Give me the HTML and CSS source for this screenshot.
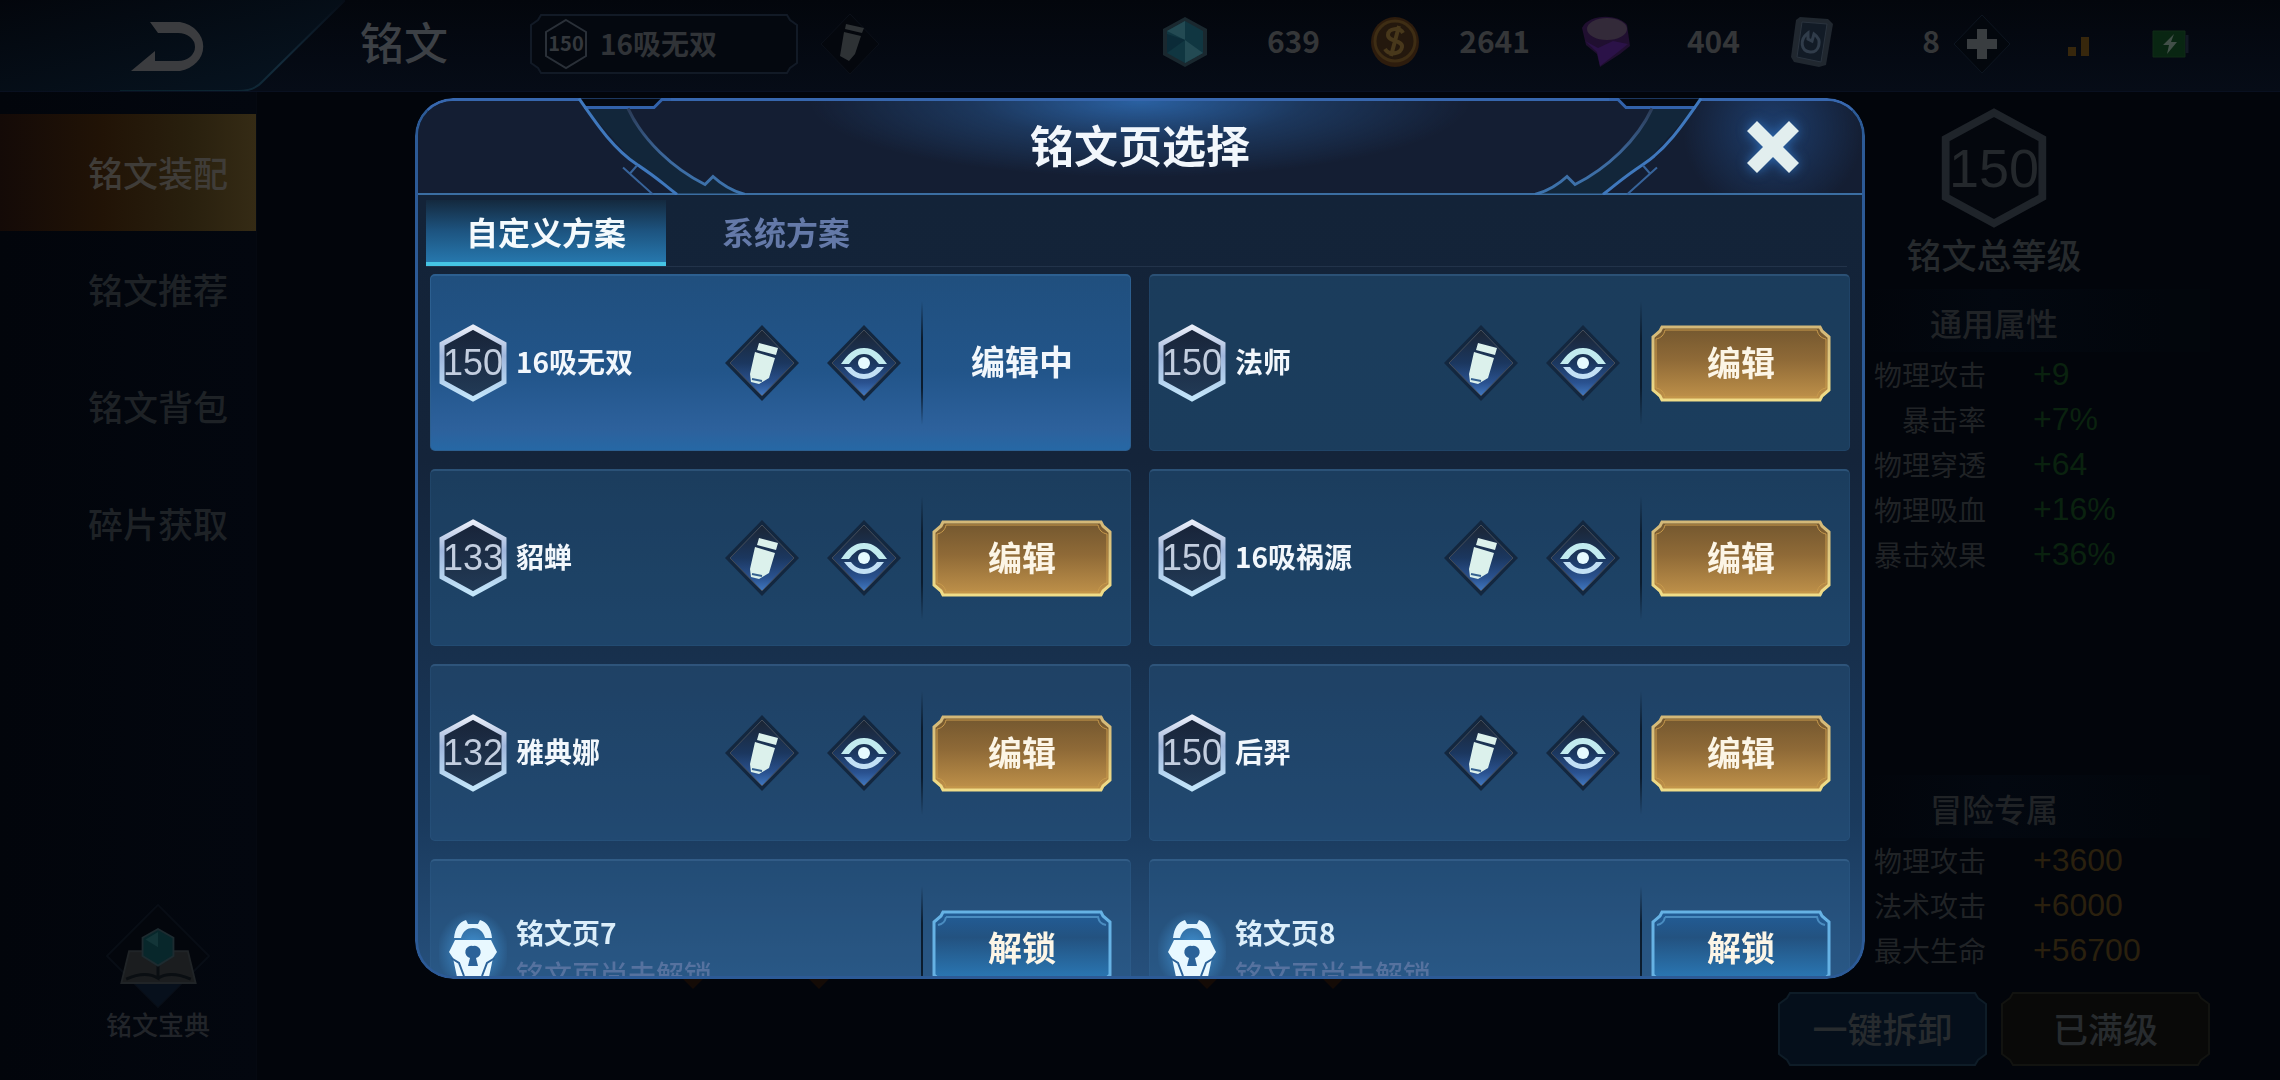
FILE: index.html
```html
<!DOCTYPE html>
<html lang="zh-CN">
<head>
<meta charset="utf-8">
<meta name="viewport" content="width=device-width, initial-scale=1">
<title>铭文</title>
<link rel="stylesheet" href="styles.css">
</head>
<body>
<svg class="sprite" width="0" height="0" aria-hidden="true">
  <defs>
    <linearGradient id="gold" x1="0" y1="0" x2="0" y2="1"><stop offset="0" stop-color="#73572f"/><stop offset=".45" stop-color="#8f6a37"/><stop offset="1" stop-color="#c0924a"/></linearGradient>
    <linearGradient id="goldEdge" x1="0" y1="0" x2="0" y2="1"><stop offset="0" stop-color="#d3b878"/><stop offset="1" stop-color="#f0dd88"/></linearGradient>
    <linearGradient id="blue" x1="0" y1="0" x2="0" y2="1"><stop offset="0" stop-color="#225d98"/><stop offset=".35" stop-color="#235280"/><stop offset="1" stop-color="#2b7dbc"/></linearGradient>
    <linearGradient id="hexEdge" x1="0" y1="0" x2="0" y2="1"><stop offset="0" stop-color="#e9edf8"/><stop offset=".4" stop-color="#9fb6dc"/><stop offset="1" stop-color="#c3e6fb"/></linearGradient>
    <linearGradient id="hexFill" x1="0" y1="0" x2="0" y2="1"><stop offset="0" stop-color="#182338"/><stop offset="1" stop-color="#223b57"/></linearGradient>
    <linearGradient id="diaFill" x1="0" y1="0" x2="0" y2="1"><stop offset="0" stop-color="#1b2534"/><stop offset=".5" stop-color="#1b375f"/><stop offset=".8" stop-color="#2a5290"/><stop offset="1" stop-color="#4179c2"/></linearGradient>
    <radialGradient id="lockGlow"><stop offset="0" stop-color="#4aa8f0" stop-opacity=".8"/><stop offset="1" stop-color="#4aa8f0" stop-opacity="0"/></radialGradient>
    <linearGradient id="backFill" x1="0" y1="0" x2="1" y2="1"><stop offset="0" stop-color="#03060c"/><stop offset="1" stop-color="#071522"/></linearGradient>
    <linearGradient id="backEdge" x1="0" y1="1" x2="1" y2="0"><stop offset="0" stop-color="#08202b"/><stop offset=".5" stop-color="#132b3b"/><stop offset="1" stop-color="#060c16"/></linearGradient>
    <linearGradient id="curve" x1="0" y1="0" x2="0" y2="1"><stop offset="0" stop-color="#2b3b56"/><stop offset=".6" stop-color="#3d6aa0"/><stop offset="1" stop-color="#3d74ae"/></linearGradient>
  </defs>
  <symbol id="hex" viewBox="0 0 68 78"><path d="M34 3 65 20V58L34 75 3 58V20Z" fill="url(#hexFill)" stroke="url(#hexEdge)" stroke-width="5"/></symbol>
  <symbol id="hex-dim" viewBox="0 0 68 78"><path d="M34 3 65 20V58L34 75 3 58V20Z" fill="#04070d" stroke="#1f242a" stroke-width="5"/></symbol>
  <symbol id="pencil" viewBox="0 0 76 78">
    <path d="M38 1 75 39 38 77 1 39Z" fill="#13273f"/>
    <path d="M38 6 70 39 38 72 6 39Z" fill="url(#diaFill)" stroke="#444d5a" stroke-width="1"/>
    <path d="M35 19 54 24 52 31 33 26ZM31 28 51 34 45 54 35 60 27 58 26 50Z" fill="#dcf1ec"/>
    <path d="M28 55 33 56 38 57" stroke="#35608f" stroke-width="2" fill="none"/>
  </symbol>
  <symbol id="eye" viewBox="0 0 76 78">
    <path d="M38 1 75 39 38 77 1 39Z" fill="#13273f"/>
    <path d="M38 6 70 39 38 72 6 39Z" fill="url(#diaFill)" stroke="#444d5a" stroke-width="1"/>
    <path d="M15 40C22 30 28 24 38 24S54 30 61 40H53C49 35 45 30 38 30S27 35 23 40Z" fill="#c2ebef"/>
    <path d="M18 43H25C28 47 32 50 38 50S48 47 51 43H58C52 51 46 55 38 55S24 51 18 43Z" fill="#c2e0f5"/>
    <circle cx="38" cy="39" r="6" fill="#e6fbff"/>
  </symbol>
  <symbol id="lock" viewBox="0 0 68 78">
    <ellipse cx="34" cy="42" rx="36" ry="40" fill="url(#lockGlow)"/>
    <path d="M15 29C16 19 20 13 27 11L29 15H39L41 11C48 13 52 19 53 29H46C44 22 40 19 34 19S24 22 22 29Z" fill="#e2f5ff"/>
    <path d="M16 31H52L58 43 54 49 50 68 45 75H23L18 68 14 49 10 43Z" fill="#e8f8ff"/>
    <path d="M34 37A6 6 0 0 1 37 49L39 57H29L31 49A6 6 0 0 1 34 37Z" fill="#2b6299"/>
    <path d="M12 49 20 54 25 67M56 49 48 54 43 67" stroke="#2b6299" stroke-width="2" fill="none"/>
  </symbol>
  <symbol id="plate-gold" viewBox="0 0 180 77">
    <path d="M11 2H169L171 6 178 12V65L171 71 169 75H11L9 71 2 65V12L9 6Z" fill="url(#gold)" stroke="url(#goldEdge)" stroke-width="3"/>
    <path d="M14 5H166C167 10 170 13 175 14V63C170 64 167 67 166 72H14C13 67 10 64 5 63V14C10 13 13 10 14 5Z" fill="none" stroke="#c99b4d" stroke-width="1"/>
  </symbol>
  <symbol id="plate-blue" viewBox="0 0 180 77">
    <path d="M11 2H169L171 6 178 12V65L171 71 169 75H11L9 71 2 65V12L9 6Z" fill="url(#blue)" stroke="#66b2e4" stroke-width="3"/>
    <path d="M14 7H166C167 12 169 14 174 15M6 15C11 14 13 12 14 7" fill="none" stroke="#4a8cc0" stroke-width="2"/>
  </symbol>
  <symbol id="corner" viewBox="0 0 340 96">
    <path d="M165 0H249L241 8H171Z" fill="#050a12"/>
    <path d="M171 10H214C228 40 252 66 290 86L298 78 326 95H262L222 67Z" fill="#12263a"/>
    <path d="M169 9H239L247 1H256" fill="none" stroke="#3262aa" stroke-width="3"/>
    <path d="M164 0C182 26 198 50 222 66S246 84 262 96" fill="none" stroke="#3f78bd" stroke-width="3"/>
    <path d="M213 10C228 42 258 70 290 86L298 78Q312 91 330 96" fill="none" stroke="url(#curve)" stroke-width="3"/>
    <path d="M222 67 215 75M208 69 238 96" fill="none" stroke="#37639a" stroke-width="2"/>
  </symbol>
</svg>

<div class="screen">
  <header class="topbar">
    <button class="back" aria-label="返回">
      <svg viewBox="0 0 345 91" width="345" height="91"><path d="M0 0H345L262 82Q254 91 238 91H0Z" fill="url(#backFill)"/><path d="M345 0 262 82Q254 91 238 91H120" fill="none" stroke="url(#backEdge)" stroke-width="2"/><path d="M150 22H180A29 25 0 0 1 180 71H131L155 51V61H178A17 14 0 0 0 178 33H158Z" fill="#3b3c3f"/></svg>
    </button>
    <h1 class="page-name">铭文</h1>
    <button class="page-select">
      <svg class="page-select-frame" viewBox="0 0 268 60" aria-hidden="true"><path d="M11 1H257L260 6 267 11V49L260 54 257 59H11L8 54 1 49V11L8 6Z" fill="#04080f" stroke="#121a26" stroke-width="2"/></svg>
      <span class="mini-badge"><svg viewBox="0 0 44 52" aria-hidden="true"><path d="M22 2 42 14V38L22 50 2 38V14Z" fill="none" stroke="#2a3038" stroke-width="2"/></svg><b>150</b></span>
      <span class="page-select-name">16吸无双</span>
    </button>
    <button class="rename" aria-label="改名">
      <svg viewBox="0 0 60 62" width="60" height="62"><path d="M30 1 59 31 30 61 1 31Z" fill="#04070d" stroke="#0b1019"/><path d="M26 11 44 15 42 20 25 16ZM24 19 41 23 35 41 29 48 20 43Z" fill="#2e3235"/></svg>
    </button>
    <ul class="wallet">
      <li><svg viewBox="0 0 50 52"><path d="M25 1 47 13V39L25 51 3 39V13Z" fill="#1a282f"/><path d="M25 5 43 15V37L25 47 7 37V15Z" fill="#103641"/><path d="M25 5V24L7 15ZM25 24 43 37 25 47Z" fill="#234a53"/><path d="M25 24 7 37V18Z" fill="#0b2b38"/></svg><span>639</span></li>
      <li><svg viewBox="0 0 50 52"><ellipse cx="25" cy="26" rx="24" ry="25" fill="#2d1c0d"/><circle cx="25" cy="25" r="20" fill="#24180d" stroke="#3e2d14" stroke-width="3"/><path d="M33 17C30 11 18 12 18 19S33 24 32 31 19 40 15 33M29 10 21 40" fill="none" stroke="#48381b" stroke-width="4"/></svg><span>2641</span></li>
      <li><svg viewBox="0 0 50 52"><path d="M2 12C8-2 38-3 47 9L50 30 40 38 20 51 17 38 6 29Z" fill="#200f30"/><ellipse cx="27" cy="13" rx="20" ry="11" fill="#332a39"/><path d="M5 25 18 32 33 25 48 28 38 36 20 50 17 36Z" fill="#2b1248"/></svg><span>404</span></li>
      <li class="narrow"><svg viewBox="0 0 50 52"><path d="M10 1 38 3 43 8 36 49 29 51 4 46 1 41 6 4Z" fill="#20272f"/><path d="M12 6 37 8 31 46 7 41Z" fill="#121b26" stroke="#2a333e"/><path d="M18 17C9 24 11 35 20 36S33 24 24 18L22 25 18 23Z" fill="none" stroke="#303c4a" stroke-width="3"/></svg><span>8</span></li>
    </ul>
    <button class="add" aria-label="增加"><svg viewBox="0 0 60 62" width="60" height="62"><path d="M30 2 58 31 30 60 2 31Z" fill="#03070d" stroke="#0d1520"/><path d="M25 16H35V26H45V36H35V46H25V36H15V26H25Z" fill="#393d40"/></svg></button>
    <svg class="signal" viewBox="0 0 24 30" aria-label="信号"><path d="M1 18H9V27H1ZM14 8H22V27H14Z" fill="#37270c"/></svg>
    <svg class="battery" viewBox="0 0 38 28" aria-label="电量"><path d="M1 1H33V27H1Z" fill="#092612" stroke="#102a16"/><path d="M35 5V23" stroke="#131924" stroke-width="3"/><path d="M22 4 11 15H17L15 24 25 12H19Z" fill="#424f48"/></svg>
  </header>

  <div class="stage">
    <nav class="side">
      <a class="side-item current" href="#equip">铭文装配</a>
      <a class="side-item" href="#recommend">铭文推荐</a>
      <a class="side-item" href="#bag">铭文背包</a>
      <a class="side-item" href="#shards">碎片获取</a>
      <a class="codex" href="#codex">
        <svg viewBox="0 0 110 110" width="110" height="106"><path d="M55 2 108 55 55 108 2 55Z" fill="#03060c" stroke="#080d15" stroke-width="2"/><path d="M30 83H80L55 108Z" fill="#07101c"/><path d="M25 50H86L94 83H17Z" fill="#1b1d1f" stroke="#202427" stroke-width="2"/><path d="M55 55V78Q42 70 22 79M55 78Q68 70 89 79" fill="none" stroke="#0a0e12" stroke-width="3"/><path d="M55 27 71 36V55L55 65 39 55V36Z" fill="#08272b" stroke="#1d2b30" stroke-width="2"/><path d="M55 30V46L42 38Z" fill="#133538"/></svg>
        <span>铭文宝典</span>
      </a>
    </nav>

    <div class="board" aria-hidden="true">
      <svg viewBox="0 0 20 10"><path d="M0 0H20L10 10Z"/></svg><svg viewBox="0 0 20 10"><path d="M0 0H20L10 10Z"/></svg><svg class="far" viewBox="0 0 20 10"><path d="M0 0H20L10 10Z"/></svg><svg viewBox="0 0 20 10"><path d="M0 0H20L10 10Z"/></svg>
    </div>

    <aside class="stats">
      <span class="total"><svg viewBox="0 0 68 78" preserveAspectRatio="none" aria-hidden="true"><use href="#hex-dim"/></svg><span>150</span></span>
      <p class="total-name">铭文总等级</p>
      <h2 class="stats-title">通用属性</h2>
      <dl class="attrs">
        <dt>物理攻击</dt><dd>+9</dd>
        <dt>暴击率</dt><dd>+7%</dd>
        <dt>物理穿透</dt><dd>+64</dd>
        <dt>物理吸血</dt><dd>+16%</dd>
        <dt>暴击效果</dt><dd>+36%</dd>
      </dl>
      <h2 class="stats-title bottom">冒险专属</h2>
      <dl class="attrs adventure">
        <dt>物理攻击</dt><dd>+3600</dd>
        <dt>法术攻击</dt><dd>+6000</dd>
        <dt>最大生命</dt><dd>+56700</dd>
      </dl>
      <div class="stats-actions">
        <button><svg viewBox="0 0 209 74" preserveAspectRatio="none" aria-hidden="true"><path d="M12 1H197L200 6 208 12V62L200 68 197 73H12L9 68 1 62V12L9 6Z" fill="#050f1b" stroke="#0e1c27" stroke-width="2"/></svg><span>一键拆卸</span></button>
        <button><svg viewBox="0 0 209 74" preserveAspectRatio="none" aria-hidden="true"><path d="M12 1H197L200 6 208 12V62L200 68 197 73H12L9 68 1 62V12L9 6Z" fill="#090908" stroke="#121310" stroke-width="2"/></svg><span>已满级</span></button>
      </div>
    </aside>
  </div>
</div>

<div class="overlay">
  <section class="dialog" role="dialog" aria-labelledby="dialog-title">
    <svg class="corner" aria-hidden="true"><use href="#corner"/></svg>
    <svg class="corner right" aria-hidden="true"><use href="#corner"/></svg>
    <header class="dialog-head">
      <h2 id="dialog-title">铭文页选择</h2>
      <button class="close" aria-label="关闭"><svg viewBox="0 0 54 54" width="54" height="54"><path d="M11 1 27 17 43 1 53 11 37 27 53 43 43 53 27 37 11 53 1 43 17 27 1 11Z" fill="#e2eeee"/></svg></button>
    </header>
    <div class="tabs" role="tablist">
      <button class="tab active" role="tab" aria-selected="true">自定义方案</button>
      <button class="tab" role="tab" aria-selected="false">系统方案</button>
    </div>
    <ul class="pages">
      <li class="card selected">
        <span class="badge"><svg aria-hidden="true"><use href="#hex"/></svg><span>150</span></span>
        <span class="name">16吸无双</span>
        <button class="tool" aria-label="改名"><svg><use href="#pencil"/></svg></button>
        <button class="tool" aria-label="预览"><svg><use href="#eye"/></svg></button>
        <i class="rule"></i>
        <span class="state">编辑中</span>
      </li>
      <li class="card">
        <span class="badge"><svg aria-hidden="true"><use href="#hex"/></svg><span>150</span></span>
        <span class="name">法师</span>
        <button class="tool" aria-label="改名"><svg><use href="#pencil"/></svg></button>
        <button class="tool" aria-label="预览"><svg><use href="#eye"/></svg></button>
        <i class="rule"></i>
        <button class="action"><svg aria-hidden="true"><use href="#plate-gold"/></svg><span>编辑</span></button>
      </li>
      <li class="card">
        <span class="badge"><svg aria-hidden="true"><use href="#hex"/></svg><span>133</span></span>
        <span class="name">貂蝉</span>
        <button class="tool" aria-label="改名"><svg><use href="#pencil"/></svg></button>
        <button class="tool" aria-label="预览"><svg><use href="#eye"/></svg></button>
        <i class="rule"></i>
        <button class="action"><svg aria-hidden="true"><use href="#plate-gold"/></svg><span>编辑</span></button>
      </li>
      <li class="card">
        <span class="badge"><svg aria-hidden="true"><use href="#hex"/></svg><span>150</span></span>
        <span class="name">16吸祸源</span>
        <button class="tool" aria-label="改名"><svg><use href="#pencil"/></svg></button>
        <button class="tool" aria-label="预览"><svg><use href="#eye"/></svg></button>
        <i class="rule"></i>
        <button class="action"><svg aria-hidden="true"><use href="#plate-gold"/></svg><span>编辑</span></button>
      </li>
      <li class="card">
        <span class="badge"><svg aria-hidden="true"><use href="#hex"/></svg><span>132</span></span>
        <span class="name">雅典娜</span>
        <button class="tool" aria-label="改名"><svg><use href="#pencil"/></svg></button>
        <button class="tool" aria-label="预览"><svg><use href="#eye"/></svg></button>
        <i class="rule"></i>
        <button class="action"><svg aria-hidden="true"><use href="#plate-gold"/></svg><span>编辑</span></button>
      </li>
      <li class="card">
        <span class="badge"><svg aria-hidden="true"><use href="#hex"/></svg><span>150</span></span>
        <span class="name">后羿</span>
        <button class="tool" aria-label="改名"><svg><use href="#pencil"/></svg></button>
        <button class="tool" aria-label="预览"><svg><use href="#eye"/></svg></button>
        <i class="rule"></i>
        <button class="action"><svg aria-hidden="true"><use href="#plate-gold"/></svg><span>编辑</span></button>
      </li>
      <li class="card">
        <span class="badge"><svg aria-hidden="true"><use href="#lock"/></svg></span>
        <span class="name locked">铭文页7<small>铭文页尚未解锁</small></span>
        <i class="rule"></i>
        <button class="action"><svg aria-hidden="true"><use href="#plate-blue"/></svg><span>解锁</span></button>
      </li>
      <li class="card">
        <span class="badge"><svg aria-hidden="true"><use href="#lock"/></svg></span>
        <span class="name locked">铭文页8<small>铭文页尚未解锁</small></span>
        <i class="rule"></i>
        <button class="action"><svg aria-hidden="true"><use href="#plate-blue"/></svg><span>解锁</span></button>
      </li>
    </ul>
  </section>
</div>
</body>
</html>
```
FILE: styles.css
```css
* { box-sizing: border-box; margin: 0; padding: 0; }

body {
  min-height: 100vh;
  background: #02050b;
  color: #2a2d31;
  font-family: "Noto Sans CJK SC", sans-serif;
  font-weight: 500;
  overflow: hidden;
}

button { border: 0; background: none; color: inherit; font: inherit; cursor: pointer; }
a { color: inherit; text-decoration: none; }
ul { list-style: none; }
svg { display: block; }
.sprite { position: absolute; }

.screen { display: flex; flex-direction: column; min-height: 100vh; }

/* Top bar */
.topbar {
  display: flex;
  align-items: center;
  height: 92px;
  padding: 0 90px 4px 0;
  background: linear-gradient(#03060c, #060c17);
  border-bottom: 1px solid #091020;
}
.back { flex: none; align-self: flex-start; }
.page-name { margin: 0 82px 0 15px; padding-bottom: 6px; font-size: 44px; line-height: 60px; font-weight: 500; color: #3c4045; }
.page-select { display: grid; width: 268px; height: 60px; grid-template-columns: 8px 44px 1fr; column-gap: 6px; align-items: center; text-align: left; }
.page-select-frame { grid-area: 1 / 1 / 2 / 4; }
.mini-badge { grid-area: 1 / 2; display: grid; place-items: center; width: 44px; height: 52px; color: #34383d; font-size: 20px; }
.mini-badge > * { grid-area: 1 / 1; }
.mini-badge b { line-height: 24px; padding-bottom: 2px; }
.mini-badge svg { width: 44px; height: 52px; }
.page-select-name { grid-area: 1 / 3; padding: 0 0 2px 6px; font-size: 28px; line-height: 40px; font-weight: 700; color: #303337; }
.rename { margin-left: 22px; }
.wallet { display: flex; gap: 50px; margin-left: auto; padding-bottom: 4px; }
.wallet li { display: flex; align-items: center; justify-content: space-between; width: 160px; font-size: 30px; line-height: 44px; font-weight: 700; color: #343638; }
.wallet li.narrow { width: 150px; }
.wallet span { padding-bottom: 4px; }
.wallet svg { width: 50px; height: 52px; }
.add { margin: 0 55px 0 12px; }
.signal { width: 24px; height: 30px; margin-right: 61px; }
.battery { width: 38px; height: 28px; }

.stage { display: flex; flex: 1; }

/* Left navigation */
.side {
  display: flex;
  flex-direction: column;
  width: 257px;
  padding: 22px 0 41px;
  background: linear-gradient(90deg, #02050b, #03070f);
  border-right: 1px solid #050911;
}
.side-item { display: flex; align-items: center; justify-content: center; height: 117px; padding: 0 0 2px 60px; font-size: 35px; color: #1e2226; }
.side-item.current { background: linear-gradient(90deg, #140a07, #211306 40%, #29200e 75%, #352b15); color: #3f3c38; }
.codex { display: flex; flex-direction: column; align-items: center; margin-top: auto; padding-left: 60px; font-size: 26px; line-height: 30px; color: #212429; }

.board { display: flex; flex: 1; align-items: flex-end; gap: 106px; padding: 0 0 90px 426px; }
.board svg { flex: none; width: 20px; height: 12px; fill: #140b06; }
.board .far { margin-left: 262px; }

/* Attribute totals */
.stats { display: flex; flex-direction: column; width: 502px; padding: 16px 70px 14px 0; color: #202326; }
.total { display: grid; place-items: center; height: 120px; font: 54px/60px "Liberation Sans", sans-serif; color: #24282c; }
.total > * { grid-area: 1 / 1; }
.total svg { width: 106px; height: 120px; }
.total-name { margin: 4px 0 13px; font-size: 35px; line-height: 44px; text-align: center; color: #262a2d; }
.stats-title { height: 63px; background: linear-gradient(90deg, #02050b 20%, #030810 50%, #02060c 90%); font-size: 32px; line-height: 66px; font-weight: 500; text-align: center; }
.stats-title.bottom { margin-top: auto; }
.attrs { display: grid; grid-template-columns: 208px 1fr; column-gap: 47px; font-size: 28px; line-height: 45px; }
.attrs dt { text-align: right; font-weight: 400; }
.attrs dd { font: 32px/45px "Liberation Sans", sans-serif; color: #0a220f; }
.attrs.adventure dd { color: #2a200e; }
.stats-actions { display: flex; gap: 14px; margin-top: 19px; }
.stats-actions button { display: grid; flex: 1; height: 74px; place-items: center; font-size: 35px; line-height: 48px; color: #272b2e; }
.stats-actions button > * { grid-area: 1 / 1; }
.stats-actions span { padding-bottom: 2px; }
.stats-actions svg { width: 100%; height: 74px; }

/* Page picker */
.overlay { position: fixed; inset: 0; display: flex; justify-content: center; padding: 98px 0 101px; }
.dialog {
  position: relative;
  display: flex;
  flex-direction: column;
  width: 63.6%;
  border: 3px solid #2c5a96;
  border-top-color: #3767ae;
  border-radius: 38px;
  clip-path: inset(0 round 38px);
  background: linear-gradient(#132338 100px, #14243a 360px, #1a3a5d 720px, #26507c);
  color: #f2f7fc;
}
.corner { position: absolute; top: -3px; left: -3px; width: 340px; height: 97px; z-index: 1; pointer-events: none; }
.corner.right { left: auto; right: -3px; transform: scaleX(-1); }
.dialog-head {
  display: grid;
  flex: none;
  grid-template-columns: 178px 1fr 178px;
  align-items: center;
  justify-items: center;
  height: 94px;
  border-bottom: 2px solid #3b6ea2;
  border-radius: 35px 35px 0 0;
  background:
    radial-gradient(ellipse 330px 76px at 50% 0, #2a61a2, rgba(36, 80, 134, .5) 50%, transparent),
    radial-gradient(ellipse 90px 90px at calc(100% - 89px) 30%, #1d3d6c, transparent),
    #141e33;
}
.dialog-head h2 { grid-column: 2; padding-bottom: 6px; font-size: 44px; line-height: 60px; font-weight: 700; }
.close { position: relative; z-index: 2; filter: drop-shadow(0 0 6px #2f6cb4); }

.tabs { display: flex; flex: none; margin: 5px 15px 0 8px; border-bottom: 1px solid #22334a; }
.tab { width: 240px; height: 66px; border-bottom: 4px solid transparent; font-size: 32px; line-height: 62px; font-weight: 700; color: #6479a8; }
.tab.active { border-bottom-color: #45c4e4; background: linear-gradient(#14293e, #1d5480 50%, #2677ad); color: #f4fafd; }

.pages { display: grid; flex: 1; grid-template-columns: 1fr 1fr; grid-auto-rows: 177px; gap: 18px; min-height: 0; margin-top: 7px; padding: 0 12px; overflow-y: auto; scrollbar-width: none; border-radius: 0 0 35px 35px; }
.card {
  display: flex;
  align-items: center;
  padding: 0 18px 0 8px;
  border: 1px solid rgba(70, 120, 165, .15);
  border-top: 2px solid rgba(85, 130, 175, .3);
  border-radius: 5px;
  background: rgba(48, 118, 174, .3);
}
.card:nth-child(n+5) { background: rgba(50, 106, 156, .3); }
.card.selected { border-color: #2c5f90; background: linear-gradient(#204f7e, #22558a 55%, #2d619c 88%, #2668a5); }
.badge { display: grid; flex: none; place-items: center; width: 68px; height: 78px; margin-right: 9px; font: 36px/40px "Liberation Sans", sans-serif; color: #c3cedf; }
.badge > * { grid-area: 1 / 1; }
.badge svg { width: 68px; height: 78px; }
.name { flex: 1; padding-bottom: 5px; font-size: 28px; line-height: 42px; font-weight: 700; white-space: nowrap; }
.name.locked { padding: 10px 0 0; color: #dbeefa; }
.name small { display: block; font-size: 28px; font-weight: 500; color: #56729f; }
.tool { flex: none; margin-right: 26px; }
.tool + .tool { margin-right: 0; }
.tool svg { width: 76px; height: 78px; }
.rule { flex: none; width: 2px; height: 124px; margin: 0 9px 0 19px; background: linear-gradient(transparent, #0b1c2e 30%, #0b1c2e 70%, transparent); }
.state { flex: none; width: 180px; padding-bottom: 6px; font-size: 34px; font-weight: 700; text-align: center; }
.action { display: grid; flex: none; place-items: center; width: 180px; height: 77px; font-size: 34px; line-height: 48px; font-weight: 700; color: #fcf5e6; }
.action > * { grid-area: 1 / 1; }
.action span { padding-bottom: 2px; }
.action svg { width: 180px; height: 77px; }
```
